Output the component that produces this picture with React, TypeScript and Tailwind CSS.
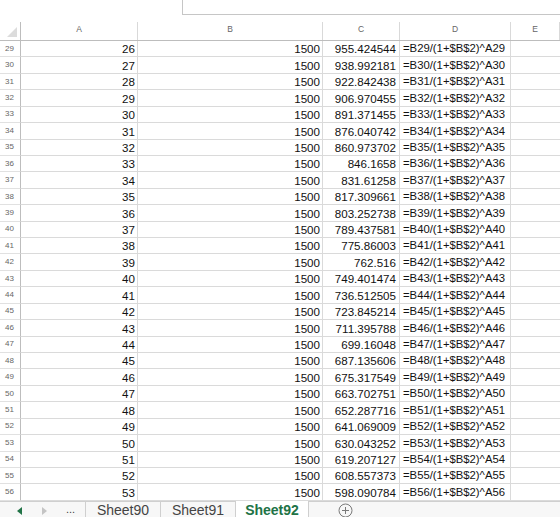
import React from "react";

const cVals = [
  "955.424544","938.992181","922.842438","906.970455","891.371455","876.040742","860.973702","846.1658","831.61258","817.309661","803.252738","789.437581","775.86003","762.516","749.401474","736.512505","723.845214","711.395788","699.16048","687.135606","675.317549","663.702751","652.287716","641.069009","630.043252","619.207127","608.557373","598.090784",
];

const cols = "grid grid-cols-[21px_117px_185px_77px_111px_1fr]";

export default function App() {
  return (
    <div className="w-[560px] h-[517px] bg-white overflow-hidden flex flex-col" style={{ fontFamily: '"Liberation Sans", Arial, sans-serif' }}>
      <div className="h-[15px] ml-[182px] border-l border-b border-[#c6c6c6] shrink-0" />
      <div className="h-[7px] shrink-0" />
      <div className={`${cols} h-[19px] shrink-0 border-b border-[#bdbdbd]`}>
        <div className="relative border-r border-[#bdbdbd]">
          <div className="absolute right-[3px] bottom-[3px] w-0 h-0 border-l-[10px] border-l-transparent border-b-[10px] border-b-[#dcdcdc]" />
        </div>
        {["A", "B", "C", "D", "E"].map((l) => (
          <div key={l} className="flex items-center justify-center pb-[3px] border-r border-[#d9d9d9] text-[8.5px] text-[#666]">{l}</div>
        ))}
      </div>
      <div className="flex flex-col shrink-0">
        {cVals.map((c, i) => {
          const r = 29 + i;
          return (
            <div key={r} className={`${cols} h-[16.43px]`}>
              <div className="flex items-center pl-[5px] border-r border-b border-r-[#bdbdbd] border-b-[#e1e1e1] text-[8px] text-[#666]">{r}</div>
              <div className="flex items-end justify-end pr-[2px] pb-[1px] border-r border-b border-[#dadada] text-[11.6px] leading-[13px] text-[#111]">{r - 3}</div>
              <div className="flex items-end justify-end pr-[2px] pb-[1px] border-r border-b border-[#dadada] text-[11.6px] leading-[13px] text-[#111]">1500</div>
              <div className="flex items-end justify-end pr-[3px] pb-[1px] border-r border-b border-[#dadada] text-[11.6px] leading-[13px] text-[#111]">{c}</div>
              <div className="flex items-end pl-[3px] pb-[1px] border-r border-b border-[#dadada] text-[11.3px] leading-[13px] text-[#111] whitespace-nowrap">{`=B${r}/(1+$B$2)^A${r}`}</div>
              <div className="border-b border-[#dadada]" />
            </div>
          );
        })}
      </div>
      <div className="flex-1 flex items-stretch bg-[#f7f7f7] relative">
        <div className="absolute left-0 right-0 top-0 h-px bg-[#cfcfcf]" />
        <div className="w-[85px] flex items-center shrink-0 relative">
          <svg className="absolute left-[17px] top-[6px]" width="6" height="8" viewBox="0 0 6 8"><path d="M5 0 L0 4 L5 8 Z" fill="#217346" /></svg>
          <svg className="absolute left-[42px] top-[6px]" width="6" height="8" viewBox="0 0 6 8"><path d="M0 0 L5 4 L0 8 Z" fill="#c4c4c4" /></svg>
          <span className="absolute left-[66px] top-[2px] text-[11px] text-[#444] leading-[12px]">...</span>
        </div>
        <div className="w-[75px] shrink-0 border-l border-[#cfcfcf] flex items-center justify-center text-[14px] text-[#444] leading-[16px] pt-[1px]">Sheet90</div>
        <div className="w-[75px] shrink-0 border-l border-[#cfcfcf] flex items-center justify-center text-[14px] text-[#444] leading-[16px] pt-[1px]">Sheet91</div>
        <div className="w-[74px] shrink-0 border-l border-r border-[#cfcfcf] bg-white relative z-10 flex items-center justify-center text-[14px] font-bold text-[#217346] leading-[16px] pt-[1px]">Sheet92</div>
        <div className="flex items-center pl-[29px] pt-[2px]">
          <svg width="15" height="15" viewBox="0 0 15 15">
            <circle cx="7.5" cy="7.5" r="6.5" fill="none" stroke="#7a7a7a" strokeWidth="1" />
            <path d="M7.5 4 V11 M4 7.5 H11" stroke="#7a7a7a" strokeWidth="1" />
          </svg>
        </div>
      </div>
    </div>
  );
}
